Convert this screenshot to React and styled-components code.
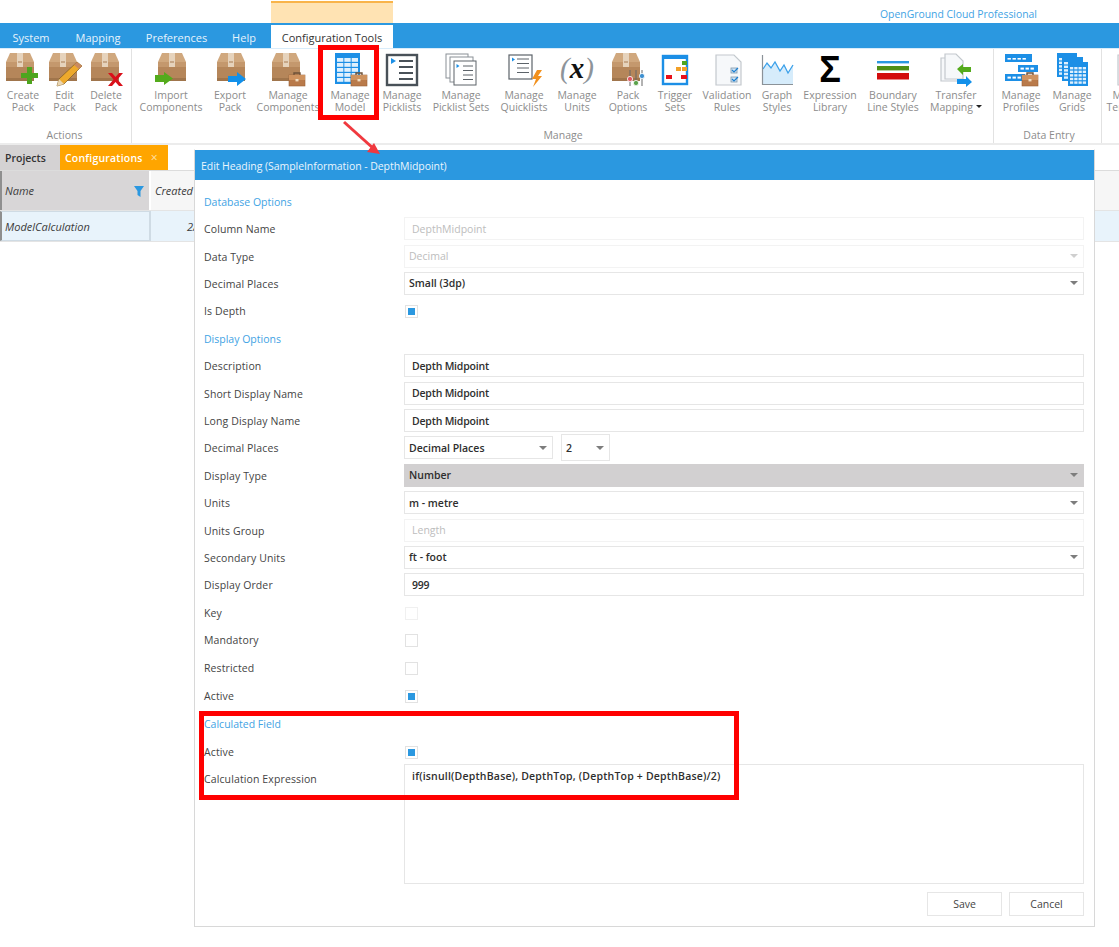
import React from "react";
import styled, { createGlobalStyle } from "styled-components";

const GlobalStyle = createGlobalStyle`
  html, body {
    margin: 0;
    padding: 0;
    background: #fff;
    font-family: "Open Sans", "Noto Sans", sans-serif;
  }
  * { box-sizing: border-box; }
`;

const BLUE = "#2b98e0";

const UnitsText = styled.text`
  font-family: "Liberation Serif", serif;
  font-style: italic;
  fill: #8d949a;
  tspan {
    font-weight: 700;
    fill: #111;
  }
`;

const SigmaText = styled.text`
  font-family: "Liberation Sans", sans-serif;
  font-weight: 700;
  fill: #000;
`;

/* ---------- icon parts ---------- */

const Box = ({ x = 0 }) => (
  <g transform={`translate(${x},0)`}>
    <path d="M4 1h20l4 9H0z" fill="#d0a87e" />
    <rect y="10" width="28" height="19" fill="#b5865a" />
    <rect y="10" width="28" height="5" fill="#c4986d" />
    <rect y="26" width="28" height="3" fill="#a0754c" />
    <rect x="11" y="1" width="6" height="14" fill="#e6d3bc" />
    <rect x="12" y="9.5" width="4" height="1" fill="#a87c52" />
  </g>
);

const Case = ({ x = 0, y = 0 }) => (
  <g transform={`translate(${x},${y})`}>
    <path d="M5 3V1h6v2" fill="none" stroke="#6d5138" strokeWidth="1.4" />
    <rect y="3" width="16" height="11" fill="#b97a4a" stroke="#9a6238" strokeWidth=".6" />
    <rect y="3" width="16" height="5" fill="#cf935f" />
    <rect x="6.5" y="7" width="3" height="2.4" fill="#f0dcc0" />
  </g>
);

const Sheet = ({ x, y, w, h, stroke = "#8a9096", sw = 1 }) => (
  <rect x={x} y={y} width={w} height={h} fill="#fff" stroke={stroke} strokeWidth={sw} />
);

const Lines = ({ x, y, w, n, gap, color = "#5c6369", sw = 1 }) => (
  <g stroke={color} strokeWidth={sw}>
    {Array.from({ length: n }).map((_, i) => (
      <line key={i} x1={x} x2={x + w} y1={y + i * gap} y2={y + i * gap} />
    ))}
  </g>
);

const TableGrid = ({ x, y, w, h, cols, rows }) => (
  <g>
    <rect x={x} y={y} width={w} height={h} fill="#1c8fe6" />
    {Array.from({ length: rows }).map((_, r) =>
      Array.from({ length: cols }).map((_, c) => (
        <rect
          key={`${r}-${c}`}
          x={x + 2 + (c * (w - 3)) / cols}
          y={y + 5 + (r * (h - 6)) / rows}
          width={(w - 3) / cols - 1}
          height={(h - 6) / rows - 1.2}
          fill="#dff0fd"
        />
      ))
    )}
  </g>
);

const BarDots = ({ x, y, w }) => (
  <g>
    <rect x={x} y={y} width={w} height="7" fill="#1c8fe6" />
    <g fill="#fff">
      {Array.from({ length: Math.floor(w / 5) - 1 }).map((_, i) => (
        <rect key={i} x={x + 2.5 + i * 5} y={y + 2.6} width="3.4" height="2" />
      ))}
    </g>
  </g>
);

const Slider = ({ x, y, color }) => (
  <g>
    <line x1={x} x2={x} y1="18" y2="34" stroke="#666" strokeWidth="1" />
    <circle cx={x} cy={y} r="2.6" fill={color} stroke="#fff" strokeWidth=".8" />
  </g>
);

const Doc = ({ x, y, w, h }) => (
  <path
    d={`M${x} ${y}h${w - 7}l7 7v${h - 7}h-${w}z`}
    fill="#f6f8fa"
    stroke="#c3c8cd"
    strokeWidth="1.2"
  />
);

const ICONS = {
  create: (
    <>
      <Box x={1} />
      <path d="M22 15h5v6h6v5h-6v6h-5v-6h-6v-5h6z" fill="#4ea51e" />
    </>
  ),
  edit: (
    <>
      <Box x={2} />
      <path d="M30 10l5 4-18 18-7 2 2-7z" fill="#eda92c" stroke="#7d5a22" strokeWidth=".7" />
      <path d="M30 10l5 4-3 3-5-4z" fill="#c98a60" />
      <path d="M10 34l2-7 5 5z" fill="#e9d6b4" />
    </>
  ),
  remove: (
    <>
      <Box x={3} />
      <path d="M20 21h4l3.5 4 3.5-4h4l-5.5 6.5 5.5 6.5h-4l-3.5-4-3.5 4h-4l5.5-6.5z" fill="#d9101a" />
    </>
  ),
  importer: (
    <>
      <Box x={5} />
      <path d="M2 23h9v-3l9 6.5-9 6.5v-3H2z" fill="#54ab1c" />
    </>
  ),
  exporter: (
    <>
      <Box x={5} />
      <path d="M16 24h9v-4l9 7-9 7v-4h-9z" fill="#1290ea" />
    </>
  ),
  components: (
    <>
      <Box x={2} />
      <Case x={19} y={20} />
    </>
  ),
  model: (
    <>
      <TableGrid x={3} y={1} w={25} h={31} cols={3} rows={5} />
      <Case x={19} y={20} />
    </>
  ),
  picklists: (
    <>
      <rect x="3" y="3" width="30" height="30" fill="#fff" stroke="#495158" strokeWidth="2.4" />
      <path d="M7 6l5 3-5 3z" fill="#1c8fe6" />
      <Lines x={15} y={9} w={14} n={4} gap={6} color="#495158" sw={2} />
    </>
  ),
  picklistSets: (
    <>
      <Sheet x={3} y={2} w={22} h={24} />
      <Sheet x={7} y={5} w={23} h={25} />
      <Sheet x={11} y={9} w={22} h={24} stroke="#5c6369" />
      <path d="M13.5 12l3 2-3 2z" fill="#1c8fe6" />
      <Lines x={20} y={14} w={10} n={4} gap={4.5} />
    </>
  ),
  quicklists: (
    <>
      <Sheet x={3} y={3} w={23} h={24} stroke="#5c6369" sw={1.2} />
      <path d="M6 5.5l3 2-3 2z" fill="#1c8fe6" />
      <Lines x={11} y={7} w={12} n={4} gap={4.5} />
      <path d="M31 18h5l-4 6h4l-9 11 3-8h-4z" fill="#f2901c" />
    </>
  ),
  units: (
    <UnitsText x="18" y="26" fontSize="29" textAnchor="middle">
      (<tspan>x</tspan>)
    </UnitsText>
  ),
  options: (
    <>
      <Box x={2} />
      <Slider x={20} y={27} color="#e0555e" />
      <Slider x={26} y={31} color="#5aa24a" />
      <Slider x={32} y={24} color="#3d8fd0" />
    </>
  ),
  trigger: (
    <>
      <rect x="6" y="4" width="24" height="28" fill="#fff" stroke="#1c8fe6" strokeWidth="2.4" />
      <rect x="5" y="3" width="26" height="4" fill="#1c8fe6" />
      <rect x="25" y="9" width="5" height="4" fill="#4ea51e" />
      <rect x="19" y="15" width="5" height="4" fill="#f2a028" />
      <rect x="25" y="15" width="5" height="4" fill="#f2a028" />
      <rect x="9" y="23" width="6" height="4" fill="#e8101a" />
      <rect x="24" y="23" width="6" height="4" fill="#e8101a" />
    </>
  ),
  validation: (
    <>
      <Doc x={7} y={3} w={25} h={30} />
      <rect x="22" y="16" width="6" height="5" fill="#cfe4f6" stroke="#7f97ab" strokeWidth=".8" />
      <rect x="22" y="25" width="6" height="5" fill="#cfe4f6" stroke="#7f97ab" strokeWidth=".8" />
      <path d="M23 18l2 2 4-4M23 27l2 2 4-4" fill="none" stroke="#1c7fd0" strokeWidth="1.2" />
    </>
  ),
  graph: (
    <>
      <path d="M4 17l4-6 4 5 4-6 5 9 4-6 4 8 5-8v20H4z" fill="#d6ecfb" />
      <path d="M4 17l4-6 4 5 4-6 5 9 4-6 4 8 5-8" fill="none" stroke="#3aa0ea" strokeWidth="1.3" />
      <path d="M3.5 3v29.5H34" fill="none" stroke="#8b9298" strokeWidth="1.2" />
    </>
  ),
  sigma: (
    <SigmaText x="18" y="30" fontSize="36" textAnchor="middle">Σ</SigmaText>
  ),
  boundary: (
    <>
      <rect x="2" y="9" width="32" height="2.4" fill="#2b98e0" />
      <rect x="2" y="14" width="32" height="4.4" fill="#4f8f16" />
      <rect x="2" y="21" width="32" height="6.5" fill="#d30d0d" />
    </>
  ),
  transfer: (
    <>
      <Doc x={3} y={6} w={17} h={23} />
      <Doc x={7} y={2} w={18} h={25} />
      <path d="M19 17l6-5v3h8v5h-8v3z" fill="#54ab1c" />
      <path d="M34 30l-6 5v-3h-9v-5h9v-3z" fill="#1290ea" />
    </>
  ),
  profiles: (
    <>
      <BarDots x={2} y={3} w={27} />
      <rect x="2" y="2" width="27" height="4" fill="#1c8fe6" />
      <BarDots x={15} y={13} w={20} />
      <BarDots x={2} y={22} w={20} />
      <Case x={19} y={20} />
    </>
  ),
  grids: (
    <>
      <TableGrid x={3} y={1} w={20} h={24} cols={3} rows={5} />
      <TableGrid x={8} y={5} w={21} h={24} cols={3} rows={5} />
      <TableGrid x={14} y={10} w={20} h={24} cols={4} rows={5} />
    </>
  ),
  template: <Doc x={4} y={3} w={24} h={30} />,
};

/* ---------- data ---------- */

const GROUPS = [
  {
    label: "Actions",
    pad: "2px",
    end: "4px",
    items: [
      { icon: "create", lines: ["Create", "Pack"], w: 42 },
      { icon: "edit", lines: ["Edit", "Pack"], w: 41 },
      { icon: "remove", lines: ["Delete", "Pack"], w: 42 },
    ],
  },
  {
    label: "Manage",
    pad: "7px",
    end: "6px",
    items: [
      { icon: "importer", lines: ["Import", "Components"], w: 64 },
      { icon: "exporter", lines: ["Export", "Pack"], w: 54 },
      { icon: "components", lines: ["Manage", "Components"], w: 62 },
      { icon: "model", lines: ["Manage", "Model"], w: 62 },
      { icon: "picklists", lines: ["Manage", "Picklists"], w: 42 },
      { icon: "picklistSets", lines: ["Manage", "Picklist Sets"], w: 76 },
      { icon: "quicklists", lines: ["Manage", "Quicklists"], w: 50 },
      { icon: "units", lines: ["Manage", "Units"], w: 56 },
      { icon: "options", lines: ["Pack", "Options"], w: 46 },
      { icon: "trigger", lines: ["Trigger", "Sets"], w: 48 },
      { icon: "validation", lines: ["Validation", "Rules"], w: 56 },
      { icon: "graph", lines: ["Graph", "Styles"], w: 44 },
      { icon: "sigma", lines: ["Expression", "Library"], w: 62 },
      { icon: "boundary", lines: ["Boundary", "Line Styles"], w: 64 },
      { icon: "transfer", lines: ["Transfer", "Mapping"], w: 62, caret: true },
    ],
  },
  {
    label: "Data Entry",
    pad: "4px",
    end: "1px",
    items: [
      { icon: "profiles", lines: ["Manage", "Profiles"], w: 46 },
      { icon: "grids", lines: ["Manage", "Grids"], w: 56 },
    ],
  },
  {
    label: "",
    pad: "0px",
    end: "0px",
    items: [{ icon: "template", lines: ["Manage", "Templates"], w: 60 }],
  },
];

const TABS = [
  { label: "System", w: 62 },
  { label: "Mapping", w: 72 },
  { label: "Preferences", w: 85 },
  { label: "Help", w: 50 },
];

/* ---------- layout ---------- */

const Page = styled.div`
  position: relative;
  width: 1119px;
  height: 947px;
  overflow: hidden;
  background: #fff;
  color: #3c3c3c;
  font-size: 11px;
`;

const TitleBar = styled.div`
  display: flex;
  height: 23px;
  padding-top: 1px;
`;

const ContextTab = styled.div`
  margin-left: 271px;
  width: 122px;
  background: #ffe3b3;
  border-top: 2px solid #f9b44a;
`;

const Brand = styled.div`
  margin-left: auto;
  padding: 6px 82px 0 0;
  color: #3fa3e4;
  font-size: 10.4px;
  line-height: 14px;
`;

const TabStrip = styled.div`
  display: flex;
  align-items: flex-end;
  height: 25px;
  background: ${BLUE};
`;

const Tab = styled.div`
  width: ${(p) => p.$w}px;
  margin-left: ${(p) => (p.$active ? "2px" : "0")};
  height: ${(p) => (p.$active ? "23px" : "25px")};
  display: flex;
  align-items: center;
  justify-content: center;
  padding-top: ${(p) => (p.$active ? "1px" : "3px")};
  color: ${(p) => (p.$active ? "#333" : "#e6f3fc")};
  background: ${(p) => (p.$active ? "#fff" : "transparent")};
  font-size: 11px;
  white-space: nowrap;
`;

const Ribbon = styled.div`
  display: flex;
  height: 97px;
  border-top: 1px solid #d9ecfa;
  border-bottom: 2px solid #ececec;
  overflow: hidden;
`;

const Group = styled.div`
  display: flex;
  flex-direction: column;
  flex: none;
  padding: 3px ${(p) => p.$end} 0 ${(p) => p.$pad};
  border-right: 1px solid #e2e2e2;
  &:last-child {
    border-right: 0;
  }
`;

const GroupItems = styled.div`
  display: flex;
  flex: 1;
`;

const GroupLabel = styled.div`
  height: 15px;
  text-align: center;
  color: #8c8c8c;
  font-size: 10.5px;
  line-height: 14px;
`;

const Item = styled.div`
  display: flex;
  flex-direction: column;
  align-items: center;
  flex: none;
  width: ${(p) => p.$w}px;
  color: #8c8c8c;
  font-size: 10.5px;
  line-height: 12px;
  text-align: center;
  white-space: nowrap;
`;

const ItemIcon = styled.svg`
  flex: none;
  width: 36px;
  height: 34px;
  margin-bottom: 3px;
  overflow: visible;
`;

const Caret = styled.span`
  display: inline-block;
  margin-left: 3px;
  vertical-align: 3px;
  border-left: 3px solid transparent;
  border-right: 3px solid transparent;
  border-top: 3px solid #222;
`;

const DocTabs = styled.div`
  display: flex;
  height: 26px;
  border-bottom: 1px solid #dcdcdc;
`;

const DocTab = styled.div`
  display: flex;
  align-items: center;
  gap: 8px;
  padding-left: 5px;
  width: ${(p) => p.$w}px;
  background: ${(p) => (p.$active ? "#ffa500" : "#d4d2d3")};
  color: ${(p) => (p.$active ? "#fff" : "#333")};
  font-weight: 600;
  font-size: 10.5px;
  letter-spacing: ${(p) => (p.$active ? "0.2px" : "0")};
`;

const TabClose = styled.span`
  color: #ffe2ae;
  font-size: 12px;
  font-weight: 400;
`;

const GridRow = styled.div`
  display: flex;
  height: ${(p) => p.$h}px;
  background: ${(p) => p.$bg};
  border-bottom: 1px solid #e4e4e4;
  font-style: italic;
`;

const NameCell = styled.div`
  position: relative;
  display: flex;
  align-items: center;
  width: 151px;
  padding-left: 3px;
  background: ${(p) => p.$bg || "transparent"};
  border: ${(p) => (p.$selected ? "1px solid #cfdbe4" : "0")};
  border-left: 2px solid #8f8f8f;
  border-right: 2px solid ${(p) => (p.$selected ? "#cfdbe4" : "#fff")};
`;

const ValueCell = styled.div`
  display: flex;
  align-items: center;
  padding-left: ${(p) => p.$pad}px;
`;

const FilterIcon = styled.svg`
  position: absolute;
  top: 15px;
  right: 5px;
  width: 10px;
  height: 11px;
`;

/* ---------- dialog ---------- */

const Dialog = styled.div`
  position: absolute;
  top: 149px;
  left: 194px;
  display: flex;
  flex-direction: column;
  width: 901px;
  height: 778px;
  background: #fff;
  border: 1px solid #d8d8d8;
  border-top-color: #fff;
`;

const DialogHeader = styled.div`
  display: flex;
  align-items: center;
  flex: none;
  height: 30px;
  padding: 1px 0 0 6px;
  background: ${BLUE};
  color: #eaf5fd;
  font-size: 10.5px;
  letter-spacing: -0.06px;
`;

const DialogBody = styled.div`
  flex: 1;
  padding: 8px 10px 0 9px;
`;

const Section = styled.div`
  height: 27.5px;
  display: flex;
  align-items: center;
  color: #3fa3e4;
  font-size: 10.5px;
`;

const Row = styled.div`
  display: grid;
  grid-template-columns: 200px 1fr;
  align-items: ${(p) => (p.$tall ? "start" : "center")};
  height: ${(p) => (p.$tall ? "120px" : p.$wide ? "28px" : "27.4px")};
`;

const Label = styled.div`
  color: #444;
  font-size: 10.5px;
  letter-spacing: 0.12px;
  padding-top: ${(p) => (p.$tall ? "7px" : "0")};
`;

const fieldBorder = "#e6e6e6";

const Input = styled.div`
  display: flex;
  align-items: center;
  height: 23px;
  margin-top: -1px;
  padding-left: 7px;
  border: 1.5px solid ${(p) => (p.$disabled ? "#f3f3f3" : fieldBorder)};
  color: ${(p) => (p.$disabled ? "#bdbdbd" : "#2e2e2e")};
  font-weight: ${(p) => (p.$disabled ? 400 : 600)};
  font-size: 10.5px;
  letter-spacing: ${(p) => (p.$disabled ? "0" : "-0.2px")};
`;

const SelectBox = styled.div`
  position: relative;
  display: flex;
  align-items: center;
  width: ${(p) => (p.$w ? `${p.$w}px` : "auto")};
  height: ${(p) => p.$h || 23}px;
  margin-top: -1px;
  padding-left: 4px;
  border: 1.5px solid ${(p) => (p.$gray ? "#d2d0d1" : p.$disabled ? "#f3f3f3" : fieldBorder)};
  background: ${(p) => (p.$gray ? "#d2d0d1" : "#fff")};
  color: ${(p) => (p.$disabled ? "#bdbdbd" : "#2e2e2e")};
  font-weight: ${(p) => (p.$disabled ? 400 : 600)};
  font-size: 10.5px;
  &::after {
    content: "";
    position: absolute;
    right: 5px;
    top: 50%;
    margin-top: -2px;
    border-left: 4px solid transparent;
    border-right: 4px solid transparent;
    border-top: 4px solid ${(p) => (p.$disabled ? "#cfcfcf" : "#7d7d7d")};
  }
`;

const SelectPair = styled.div`
  display: flex;
  align-items: center;
  gap: 8px;
`;

const Check = styled.div`
  display: flex;
  align-items: center;
  justify-content: center;
  width: 13px;
  height: 13px;
  margin: 1px 0 0 1px;
  border: 1.5px solid ${(p) => (p.$disabled ? "#f0f0f0" : "#e2e2e2")};
  &::after {
    content: "";
    display: ${(p) => (p.$on ? "block" : "none")};
    width: 7px;
    height: 7px;
    background: ${BLUE};
  }
`;

const TextArea = styled.div`
  height: 120px;
  margin-top: -1.5px;
  padding: 3px 7px;
  border: 1.5px solid #e6e6e6;
  color: #2e2e2e;
  font-weight: 600;
  font-size: 10.5px;
  letter-spacing: 0.2px;
  line-height: 16px;
`;

const Footer = styled.div`
  display: flex;
  justify-content: flex-end;
  gap: 7px;
  flex: none;
  padding: 0 10px 10px;
`;

const Button = styled.div`
  display: flex;
  align-items: center;
  justify-content: center;
  width: 75px;
  height: 24px;
  border: 1.5px solid #e6e6e6;
  color: #444;
  font-size: 10.5px;
`;

/* ---------- annotations ---------- */

const Callout = styled.div`
  position: absolute;
  left: ${(p) => p.$x}px;
  top: ${(p) => p.$y}px;
  width: ${(p) => p.$w}px;
  height: ${(p) => p.$h}px;
  border: 5px solid #ff0000;
  pointer-events: none;
`;

const Arrow = styled.svg`
  position: absolute;
  left: 340px;
  top: 118px;
  width: 45px;
  height: 42px;
`;

const FormRow = ({ label, children, tall, wide }) => (
  <Row $tall={tall} $wide={wide}>
    <Label $tall={tall}>{label}</Label>
    <div>{children}</div>
  </Row>
);

export default function App() {
  return (
    <Page>
      <GlobalStyle />
      <TitleBar>
        <ContextTab />
        <Brand>OpenGround Cloud Professional</Brand>
      </TitleBar>

      <TabStrip>
        {TABS.map((t) => (
          <Tab key={t.label} $w={t.w}>
            {t.label}
          </Tab>
        ))}
        <Tab $w={122} $active>
          Configuration Tools
        </Tab>
      </TabStrip>

      <Ribbon>
        {GROUPS.map((g) => (
          <Group key={g.label || "more"} $pad={g.pad} $end={g.end}>
            <GroupItems>
              {g.items.map((it) => (
                <Item key={it.icon} $w={it.w}>
                  <ItemIcon viewBox="0 0 36 34">{ICONS[it.icon]}</ItemIcon>
                  <span>{it.lines[0]}</span>
                  <span>
                    {it.lines[1]}
                    {it.caret && <Caret />}
                  </span>
                </Item>
              ))}
            </GroupItems>
            <GroupLabel>{g.label}</GroupLabel>
          </Group>
        ))}
      </Ribbon>

      <DocTabs>
        <DocTab $w={60}>Projects</DocTab>
        <DocTab $w={108} $active>
          Configurations
          <TabClose>×</TabClose>
        </DocTab>
      </DocTabs>

      <GridRow $h={40} $bg="#f6f6f6">
        <NameCell $bg="#d8d6d7">
          Name
          <FilterIcon viewBox="0 0 10 11">
            <path d="M0 0h10L6.5 5v6l-3-2V5z" fill={BLUE} />
          </FilterIcon>
        </NameCell>
        <ValueCell $pad={4}>Created</ValueCell>
      </GridRow>
      <GridRow $h={31} $bg="#e8f3fb">
        <NameCell $selected>ModelCalculation</NameCell>
        <ValueCell $pad={36}>2/</ValueCell>
      </GridRow>

      <Dialog>
        <DialogHeader>Edit Heading (SampleInformation - DepthMidpoint)</DialogHeader>
        <DialogBody>
          <Section>Database Options</Section>
          <FormRow label="Column Name">
            <Input $disabled>DepthMidpoint</Input>
          </FormRow>
          <FormRow label="Data Type">
            <SelectBox $disabled>Decimal</SelectBox>
          </FormRow>
          <FormRow label="Decimal Places">
            <SelectBox>Small (3dp)</SelectBox>
          </FormRow>
          <FormRow label="Is Depth">
            <Check $on />
          </FormRow>

          <Section>Display Options</Section>
          <FormRow label="Description">
            <Input>Depth Midpoint</Input>
          </FormRow>
          <FormRow label="Short Display Name">
            <Input>Depth Midpoint</Input>
          </FormRow>
          <FormRow label="Long Display Name">
            <Input>Depth Midpoint</Input>
          </FormRow>
          <FormRow label="Decimal Places">
            <SelectPair>
              <SelectBox $w={149}>Decimal Places</SelectBox>
              <SelectBox $w={49} $h={27}>
                2
              </SelectBox>
            </SelectPair>
          </FormRow>
          <FormRow label="Display Type">
            <SelectBox $gray>Number</SelectBox>
          </FormRow>
          <FormRow label="Units">
            <SelectBox>m - metre</SelectBox>
          </FormRow>
          <FormRow label="Units Group">
            <Input $disabled>Length</Input>
          </FormRow>
          <FormRow label="Secondary Units">
            <SelectBox>ft - foot</SelectBox>
          </FormRow>
          <FormRow label="Display Order">
            <Input>999</Input>
          </FormRow>
          <FormRow label="Key">
            <Check $disabled />
          </FormRow>
          <FormRow label="Mandatory" wide>
            <Check />
          </FormRow>
          <FormRow label="Restricted" wide>
            <Check />
          </FormRow>
          <FormRow label="Active" wide>
            <Check $on />
          </FormRow>

          <Section>Calculated Field</Section>
          <FormRow label="Active">
            <Check $on />
          </FormRow>
          <FormRow label="Calculation Expression" tall>
            <TextArea>if(isnull(DepthBase), DepthTop, (DepthTop + DepthBase)/2)</TextArea>
          </FormRow>
        </DialogBody>
        <Footer>
          <Button>Save</Button>
          <Button>Cancel</Button>
        </Footer>
      </Dialog>

      <Callout $x={318} $y={45} $w={61} $h={75} />
      <Callout $x={199} $y={711} $w={540} $h={89} />
      <Arrow viewBox="0 0 45 42">
        <path d="M4 4l30 27" stroke="#f0393f" strokeWidth="3" fill="none" />
        <path d="M40 36l-13-2 7-9z" fill="#f0393f" />
      </Arrow>
    </Page>
  );
}
